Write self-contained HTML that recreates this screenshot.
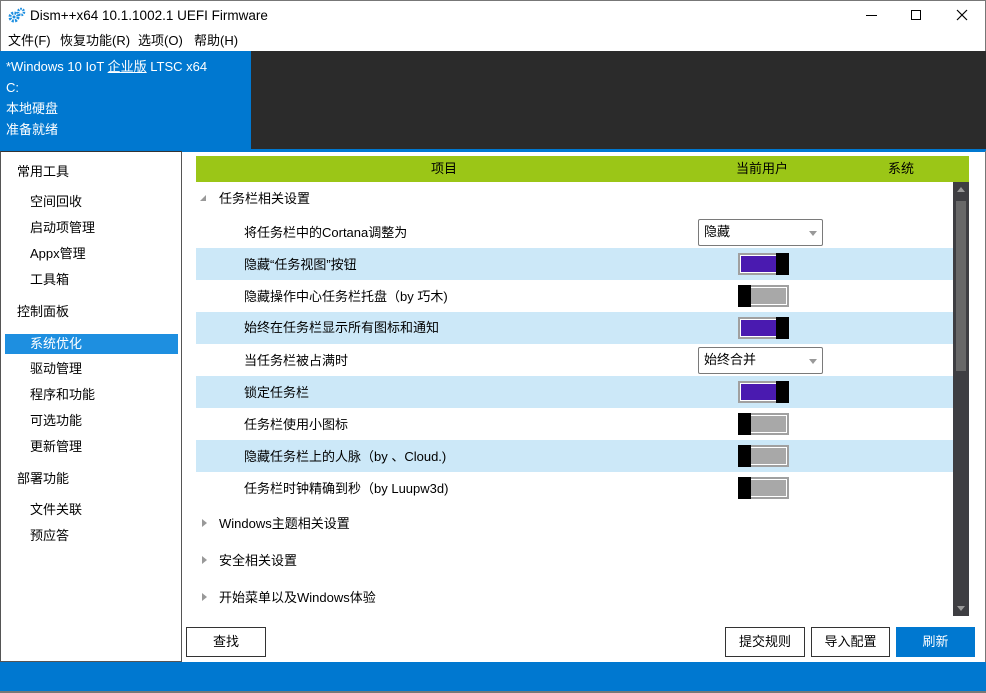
<!DOCTYPE html>
<html><head><meta charset="utf-8"><style>
*{margin:0;padding:0;box-sizing:border-box}
body{width:986px;height:693px;position:relative;overflow:hidden;background:#fff;font-family:"Liberation Sans","Noto Sans CJK SC",sans-serif;font-size:13px;color:#000}
.a{position:absolute}
.t{position:absolute;white-space:nowrap;line-height:16px}
.hl{position:absolute;left:196px;width:757px;height:32px;background:#cce8f8}
.on,.off{position:absolute;left:738px;width:51px;height:22px;border:2px solid #a0a0a0}
.on{background:#4a1ab0;box-shadow:inset 0 0 0 1px #fff}
.on:after{content:"";position:absolute;right:-2px;top:-2px;width:13px;height:22px;background:#000}
.off{background:#a8a8a8;box-shadow:inset 0 0 0 1px #fff}
.off:after{content:"";position:absolute;left:-2px;top:-2px;width:13px;height:22px;background:#000}
.dd{position:absolute;left:698px;width:125px;height:27px;border:1px solid #7a7a7a;background:#fff;border-radius:2px}
.dd span{position:absolute;left:5px;top:4px;line-height:16px}
.dd i{position:absolute;right:5px;top:11px;border-left:4px solid transparent;border-right:4px solid transparent;border-top:5px solid #999}
.btn{position:absolute;top:627px;height:30px;border:1px solid #333;background:#fff;text-align:center;line-height:28px}
.tri{position:absolute;left:202px;border-top:4px solid transparent;border-bottom:4px solid transparent;border-left:5px solid #999}
</style></head><body>
<div class="a" style="left:0;top:0;width:986px;height:51px;background:#fff;border-left:1px solid #777;border-right:1px solid #777;border-top:1px solid #777"></div>
<svg class="a" style="left:8px;top:7px" width="18" height="16" viewBox="0 0 18 16"><circle cx="6" cy="10" r="4" fill="none" stroke="#1e8fe0" stroke-width="3" stroke-dasharray="2 1.2"/><circle cx="6" cy="10" r="1.5" fill="#1e8fe0"/><circle cx="13" cy="5" r="3" fill="none" stroke="#1e8fe0" stroke-width="2.5" stroke-dasharray="1.6 1"/></svg>
<div class="t" style="left:30px;top:8px;font-size:13.5px">Dism++x64 10.1.1002.1 UEFI Firmware</div>
<div class="a" style="left:866px;top:15px;width:11px;height:1px;background:#000"></div>
<div class="a" style="left:911px;top:10px;width:10px;height:10px;border:1px solid #000"></div>
<svg class="a" style="left:956px;top:9px" width="12" height="12"><path d="M1 1L11 11M11 1L1 11" stroke="#000" stroke-width="1.2"/></svg>
<div class="t" style="left:8px;top:33px">文件(F)</div>
<div class="t" style="left:60px;top:33px">恢复功能(R)</div>
<div class="t" style="left:138px;top:33px">选项(O)</div>
<div class="t" style="left:194px;top:33px">帮助(H)</div>
<div class="a" style="left:0;top:51px;width:986px;height:101px;background:#0078d0"></div>
<div class="a" style="left:251px;top:51px;width:735px;height:98px;background:#2b2b2b"></div>
<div class="t" style="left:6px;top:59px;color:#fff">*Windows 10 IoT <u>企业版</u> LTSC x64</div>
<div class="t" style="left:6px;top:80px;color:#fff">C:</div>
<div class="t" style="left:6px;top:101px;color:#fff">本地硬盘</div>
<div class="t" style="left:6px;top:122px;color:#fff">准备就绪</div>
<div class="a" style="left:0;top:151px;width:182px;height:511px;border:1px solid #555;border-top:1px solid #333;background:#fff"></div>
<div class="a" style="left:181px;top:151px;width:805px;height:511px;border-right:1px solid #777"></div>
<div class="t" style="left:17px;top:164px">常用工具</div>
<div class="t" style="left:30px;top:194px">空间回收</div>
<div class="t" style="left:30px;top:220px">启动项管理</div>
<div class="t" style="left:30px;top:246px">Appx管理</div>
<div class="t" style="left:30px;top:272px">工具箱</div>
<div class="t" style="left:17px;top:304px">控制面板</div>
<div class="a" style="left:5px;top:334px;width:173px;height:20px;background:#1e8fe0"></div>
<div class="t" style="left:30px;top:336px;color:#fff">系统优化</div>
<div class="t" style="left:30px;top:361px">驱动管理</div>
<div class="t" style="left:30px;top:387px">程序和功能</div>
<div class="t" style="left:30px;top:413px">可选功能</div>
<div class="t" style="left:30px;top:439px">更新管理</div>
<div class="t" style="left:17px;top:471px">部署功能</div>
<div class="t" style="left:30px;top:502px">文件关联</div>
<div class="t" style="left:30px;top:528px">预应答</div>
<div class="a" style="left:196px;top:156px;width:773px;height:26px;background:#9bc617"></div>
<div class="t" style="left:431px;top:161px">项目</div>
<div class="t" style="left:736px;top:161px">当前用户</div>
<div class="t" style="left:888px;top:161px">系统</div>
<div class="a" style="left:953px;top:182px;width:16px;height:434px;background:#3e3e42"></div>
<div class="a" style="left:956px;top:201px;width:10px;height:170px;background:#686868"></div>
<div class="a" style="left:957px;top:187px;border-left:4px solid transparent;border-right:4px solid transparent;border-bottom:5px solid #999"></div>
<div class="a" style="left:957px;top:606px;border-left:4px solid transparent;border-right:4px solid transparent;border-top:5px solid #999"></div>
<div class="a" style="left:200px;top:195px;border-left:6px solid transparent;border-bottom:6px solid #999"></div>
<div class="t" style="left:219px;top:191px">任务栏相关设置</div>
<div class="t" style="left:244px;top:225px">将任务栏中的Cortana调整为</div>
<div class="dd" style="top:219px"><span>隐藏</span><i></i></div>
<div class="hl" style="top:248px"></div>
<div class="t" style="left:244px;top:257px">隐藏“任务视图”按钮</div>
<div class="on" style="top:253px"></div>
<div class="t" style="left:244px;top:289px">隐藏操作中心任务栏托盘（by 巧木)</div>
<div class="off" style="top:285px"></div>
<div class="hl" style="top:312px"></div>
<div class="t" style="left:244px;top:320px">始终在任务栏显示所有图标和通知</div>
<div class="on" style="top:317px"></div>
<div class="t" style="left:244px;top:353px">当任务栏被占满时</div>
<div class="dd" style="top:347px"><span>始终合并</span><i></i></div>
<div class="hl" style="top:376px"></div>
<div class="t" style="left:244px;top:385px">锁定任务栏</div>
<div class="on" style="top:381px"></div>
<div class="t" style="left:244px;top:417px">任务栏使用小图标</div>
<div class="off" style="top:413px"></div>
<div class="hl" style="top:440px"></div>
<div class="t" style="left:244px;top:449px">隐藏任务栏上的人脉（by 、Cloud.)</div>
<div class="off" style="top:445px"></div>
<div class="t" style="left:244px;top:481px">任务栏时钟精确到秒（by Luupw3d)</div>
<div class="off" style="top:477px"></div>
<div class="tri" style="top:519px"></div><div class="t" style="left:219px;top:516px">Windows主题相关设置</div>
<div class="tri" style="top:556px"></div><div class="t" style="left:219px;top:553px">安全相关设置</div>
<div class="tri" style="top:593px"></div><div class="t" style="left:219px;top:590px">开始菜单以及Windows体验</div>
<div class="btn" style="left:186px;width:80px">查找</div>
<div class="btn" style="left:725px;width:80px">提交规则</div>
<div class="btn" style="left:811px;width:79px">导入配置</div>
<div class="btn" style="left:896px;width:79px;background:#0078d0;border-color:#0078d0;color:#fff">刷新</div>
<div class="a" style="left:0;top:662px;width:986px;height:29px;background:#0078d0"></div>
<div class="a" style="left:0;top:691px;width:986px;height:2px;background:#777"></div>
</body></html>
